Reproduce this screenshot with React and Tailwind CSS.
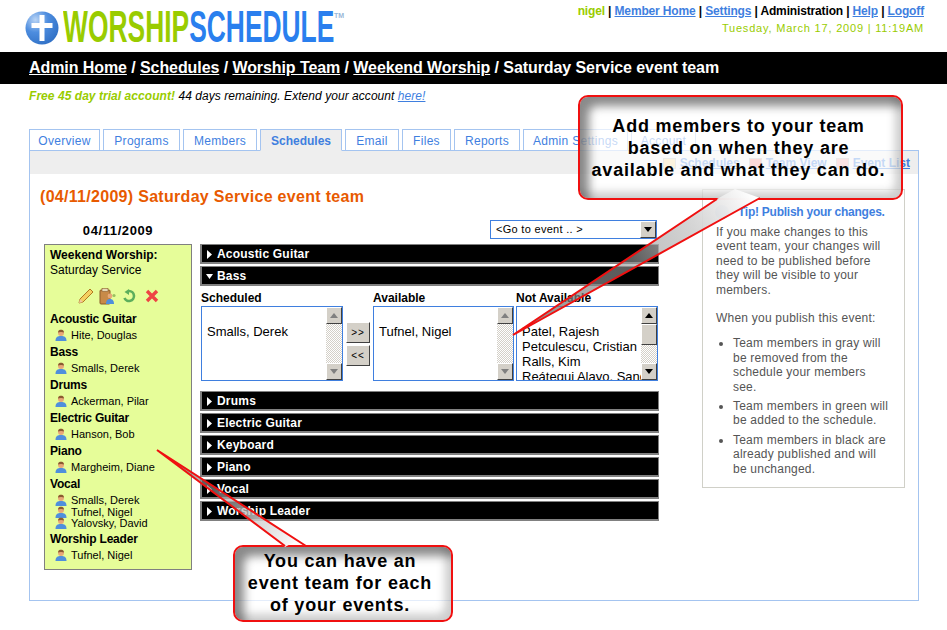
const tabs = [
  ["Overview", "w-[71px]"],
  ["Programs", "w-[77px]"],
  ["Members", "w-[74px]"],
  ["Schedules", "w-[82px]"],
  ["Email", "w-[54px]"],
  ["Files", "w-[49px]"],
  ["Reports", "w-[66px]"],
  ["Admin Settings", "w-[105px]"],
  ["Account", "w-[65px]"],
];

const roster = [
  ["Acoustic Guitar", ["Hite, Douglas"]],
  ["Bass", ["Smalls, Derek"]],
  ["Drums", ["Ackerman, Pilar"]],
  ["Electric Guitar", ["Hanson, Bob"]],
  ["Piano", ["Margheim, Diane"]],
  ["Vocal", ["Smalls, Derek", "Tufnel, Nigel", "Yalovsky, David"]],
  ["Worship Leader", ["Tufnel, Nigel"]],
];

function Globe() {
  return (
    <svg width="34" height="34" viewBox="0 0 34 34" className="shrink-0">
      <defs>
        <radialGradient id="globe" cx="0.3" cy="0.25" r="0.85">
          <stop offset="0" stopColor="#b9d4f5" />
          <stop offset="0.45" stopColor="#4d8ddf" />
          <stop offset="1" stopColor="#2f6fc4" />
        </radialGradient>
      </defs>
      <circle cx="17" cy="17" r="16.5" fill="url(#globe)" />
      <path d="M14.5 4h5v8h8v5h-8v13h-5V17h-8v-5h8z" fill="#fff" />
    </svg>
  );
}

function Person() {
  return (
    <svg width="12" height="12" viewBox="0 0 12 12" className="shrink-0">
      <path d="M0.5 12c0-4 2-5 5.5-5s5.5 1 5.5 5z" fill="#4f8fdc" />
      <circle cx="6" cy="4" r="3" fill="#e8a878" />
      <path d="M3 3.6C3.2 1.2 4.6.8 6 .8s2.8.4 3 2.8C7.6 2.8 4.6 2.8 3 3.6z" fill="#8a5a30" />
    </svg>
  );
}

function Triangle({ open }) {
  return (
    <svg width="7" height="9" viewBox="0 0 7 9" className="shrink-0">
      {open ? <polygon points="0,2 7,2 3.5,7" fill="#fff" /> : <polygon points="1,0 6,4.5 1,9" fill="#fff" />}
    </svg>
  );
}

function AccRow({ label, open }) {
  return (
    <div className="h-[20px] flex items-center gap-[4px] pl-[4px] pt-[1px] bg-black border border-b-2 border-l-2 border-[#808080] text-white text-[12px] font-bold tracking-[0.2px]">
      <Triangle open={open} />
      {label}
    </div>
  );
}

function ScrollBtn({ down, active }) {
  return (
    <div className="w-[16px] h-[17px] shrink-0 flex items-center justify-center bg-[#d4d0c8] border border-t-white border-l-white border-r-[#404040] border-b-[#404040]">
      <svg width="8" height="5" viewBox="0 0 8 5">
        <polygon points={down ? "0,0 8,0 4,5" : "4,0 8,5 0,5"} fill={active ? "#000" : "#808080"} />
      </svg>
    </div>
  );
}

function Listbox({ width, items, active }) {
  return (
    <div className={`${width} h-[75px] flex bg-white border border-[#3f7fdf] overflow-hidden`}>
      <div className="flex-1 pt-[17px] pl-[5px] text-[13px] leading-[15px] text-black whitespace-nowrap overflow-hidden">
        {items.map((n) => (
          <div key={n}>{n}</div>
        ))}
      </div>
      <div className="w-[16px] flex flex-col bg-[repeating-conic-gradient(#d4d0c8_0_25%,#fff_0_50%)] bg-[length:2px_2px]">
        <ScrollBtn active={active} />
        {active && <div className="w-[16px] h-[21px] bg-[#d4d0c8] border border-t-white border-l-white border-r-[#404040] border-b-[#404040]" />}
        <div className="flex-1" />
        <ScrollBtn down active={active} />
      </div>
    </div>
  );
}

function MoveBtn({ label }) {
  return (
    <div className="w-[24px] h-[21px] flex items-center justify-center bg-[#d4d0c8] border border-t-white border-l-white border-r-[#404040] border-b-[#404040] text-[10px] tracking-[1px] text-black">
      {label}
    </div>
  );
}

function Bubble({ className, children }) {
  return (
    <div className={`absolute z-20 flex items-center justify-center text-center bg-white/70 border-2 border-[#f01010] rounded-[10px] font-bold text-[18px] leading-[22px] tracking-[0.8px] text-black shadow-[inset_9px_9px_10px_rgba(60,60,60,0.6),inset_-6px_-6px_8px_rgba(90,90,90,0.3)] ${className}`}>
      {children}
    </div>
  );
}

function Tails() {
  return (
    <svg className="absolute z-30 left-0 top-0 pointer-events-none" width="947" height="630" viewBox="0 0 947 630">
      <defs>
        <linearGradient id="tailA" x1="750" y1="190" x2="513" y2="335" gradientUnits="userSpaceOnUse">
          <stop offset="0" stopColor="#fff" stopOpacity="1" />
          <stop offset="0.18" stopColor="#ddd" stopOpacity="0.95" />
          <stop offset="0.5" stopColor="#999" stopOpacity="0.6" />
          <stop offset="1" stopColor="#666" stopOpacity="0.85" />
        </linearGradient>
        <linearGradient id="tailB" x1="296" y1="548" x2="157" y2="450" gradientUnits="userSpaceOnUse">
          <stop offset="0" stopColor="#fff" stopOpacity="1" />
          <stop offset="0.3" stopColor="#ccc" stopOpacity="0.8" />
          <stop offset="0.6" stopColor="#999" stopOpacity="0.6" />
          <stop offset="1" stopColor="#666" stopOpacity="0.9" />
        </linearGradient>
      </defs>
      <polygon points="717,199 735,189 760,198 513,335" fill="url(#tailA)" />
      <polyline points="717,199 513,335 760,198" fill="none" stroke="#f01010" strokeWidth="2" />
      <polygon points="285,547 296,541 306,547 157,450" fill="url(#tailB)" />
      <polyline points="285,546 157,450 306,546" fill="none" stroke="#f01010" strokeWidth="2" />
    </svg>
  );
}

function ActionIcons() {
  return (
    <div className="h-[16px] mt-[10px] flex items-center pl-[28px]">
      <svg width="16" height="16" viewBox="0 0 16 16">
        <path d="M1 15l1-4L12 1l3 3L5 14z" fill="#f5d060" stroke="#b07820" strokeWidth="1" />
        <path d="M1 15l1-4 3 3z" fill="#f0c8a0" />
      </svg>
      <svg className="ml-[5px]" width="17" height="17" viewBox="0 0 17 17">
        <rect x="1" y="2" width="10" height="14" rx="1" fill="#c88a48" stroke="#8a5a28" />
        <rect x="3" y="0.5" width="6" height="3" fill="#e6d8b8" stroke="#8a5a28" strokeWidth="0.6" />
        <circle cx="11" cy="8" r="2.4" fill="#e8a878" />
        <path d="M7 16c0-4 2-5 4-5s4 1 4 5z" fill="#4f8fdc" />
        <circle cx="15" cy="7.5" r="1.6" fill="#9ac060" />
      </svg>
      <svg className="ml-[6px]" width="14" height="14" viewBox="0 0 14 14">
        <path d="M7 2a5 5 0 1 1-4.6 7" fill="none" stroke="#5cae5c" strokeWidth="2.6" />
        <polygon points="7,0 7,6 2.5,3" fill="#5cae5c" />
      </svg>
      <svg className="ml-[9px]" width="14" height="14" viewBox="0 0 14 14">
        <path d="M2 2l10 10M12 2L2 12" stroke="#ee4444" strokeWidth="3.4" />
      </svg>
    </div>
  );
}

function TopLink({ icon, label }) {
  return (
    <a className="flex items-center gap-[4px] pt-[1px] text-[#3f7fdf] font-bold underline text-[12px]">
      <span className={`w-[13px] h-[11px] border border-[#b8b8b8] ${icon}`} />
      {label}
    </a>
  );
}

export default function App() {
  return (
    <div className="relative w-[947px] h-[630px] overflow-hidden bg-white font-['Liberation_Sans',Arial,sans-serif] text-[12px] text-black">
      {/* header */}
      <div className="h-[52px] flex justify-between">
        <div className="flex items-start pt-[11px] pl-[25px]">
          <Globe />
          <div className="relative w-[270px] h-[32px] ml-[4px]">
            <div className="absolute left-0 top-[-7px] origin-left scale-x-[0.6] text-[44px] leading-[46px] font-bold whitespace-nowrap">
              <span className="text-[#99cc00]">WORSHIP</span>
              <span className="text-[#2a7fee]">SCHEDULE</span>
            </div>
          </div>
          <span className="text-[7px] leading-[8px] font-bold text-[#99b8d8] mt-[1px] ml-[1px]">TM</span>
        </div>
        <div className="pr-[23px] pt-[4px] text-right">
          <div className="text-[12px] leading-[15px] font-bold whitespace-nowrap tracking-[-0.15px]">
            <span className="text-[#99cc00]">nigel</span> |{" "}
            <a className="text-[#3f7fdf] underline">Member Home</a> |{" "}
            <a className="text-[#3f7fdf] underline">Settings</a> | Administration |{" "}
            <a className="text-[#3f7fdf] underline">Help</a> |{" "}
            <a className="text-[#3f7fdf] underline">Logoff</a>
          </div>
          <div className="mt-[2px] text-[11px] leading-[14px] tracking-[0.8px] text-[#99cc00]">Tuesday, March 17, 2009 | 11:19AM</div>
        </div>
      </div>

      {/* breadcrumb */}
      <div className="h-[32px] flex items-center pl-[29px] bg-black text-white text-[16px] font-bold tracking-[-0.08px]">
        <a className="underline">Admin Home</a>
        <span>&nbsp;/&nbsp;</span>
        <a className="underline">Schedules</a>
        <span>&nbsp;/&nbsp;</span>
        <a className="underline">Worship Team</a>
        <span>&nbsp;/&nbsp;</span>
        <a className="underline">Weekend Worship</a>
        <span>&nbsp;/ Saturday Service event team</span>
      </div>

      <div className="pl-[29px] pt-[5px] h-[45px] leading-[15px] italic text-[12px] tracking-[0.05px]">
        <span className="font-bold text-[#99cc00]">Free 45 day trial account!</span> 44 days remaining. Extend your account{" "}
        <a className="text-[#3f7fdf] underline">here!</a>
      </div>

      {/* tabs */}
      <div className="relative z-10 flex gap-[3px] pl-[29px] -mb-px">
        {tabs.map(([name, w]) => (
          <div
            key={name}
            className={`${w} h-[22px] pt-[1px] flex items-center justify-center border border-[#a4c4f0] text-[12px] text-[#3f7fdf] ${
              name === "Schedules" ? "bg-[#eeeeee] border-b-[#eeeeee] font-bold" : "bg-white tracking-[0.3px]"
            }`}
          >
            {name}
          </div>
        ))}
      </div>

      {/* panel */}
      <div className="ml-[29px] w-[890px] h-[451px] border border-[#a4c4f0]">
        <div className="h-[23px] flex items-center justify-end gap-[9px] pr-[8px] bg-[#eeeeee]">
          <TopLink icon="bg-[#f0d890]" label="Schedules" />
          <TopLink icon="bg-[#f08080]" label="Team View" />
          <TopLink icon="bg-[#f0a0a0]" label="Event List" />
        </div>

        <div className="flex">
          <div className="w-[672px]">
            <div className="mt-[14px] pl-[10px] h-[18px] text-[16px] leading-[18px] font-bold tracking-[0.3px] text-[#e85a00]">
              (04/11/2009) Saturday Service event team
            </div>
            <div className="mt-[14px] flex pl-[14px] gap-[8px]">
              {/* left roster */}
              <div className="w-[148px]">
                <div className="h-[24px] pt-[3px] text-center text-[13px] leading-[16px] font-bold tracking-[0.6px]">04/11/2009</div>
                <div className="h-[326px] bg-[#e6fd99] border border-[#808080] pl-[5px] pt-[3px]">
                  <div className="font-bold leading-[15px]">Weekend Worship:</div>
                  <div className="leading-[15px]">Saturday Service</div>
                  <ActionIcons />
                  <div className="mt-[7px]">
                    {roster.map(([part, names]) => (
                      <div key={part} className="pb-[3px]">
                        <div className="h-[16px] font-bold text-[12px] leading-[16px] tracking-[-0.2px]">{part}</div>
                        <div className="mt-[2px]">
                          {names.map((n) => (
                            <div key={n} className="h-[11px] first:h-[12px] flex items-center gap-[4px] pl-[5px] text-[11px] leading-[12px]">
                              <Person />
                              {n}
                            </div>
                          ))}
                        </div>
                      </div>
                    ))}
                  </div>
                </div>
              </div>

              {/* team columns */}
              <div className="w-[459px]">
                <div className="h-[24px] flex justify-end pr-[2px]">
                  <div className="w-[167px] h-[19px] flex items-center justify-between pl-[5px] border border-[#3f7fdf] bg-white text-[11px] tracking-[0.3px]">
                    &lt;Go to event .. &gt;
                    <ScrollBtn down active />
                  </div>
                </div>
                <div className="flex flex-col gap-[2px]">
                  <AccRow label="Acoustic Guitar" />
                  <AccRow label="Bass" open />
                  <div className="h-[101px] pl-[1px] pt-[2px]">
                    <div className="flex font-bold text-[12px] leading-[16px]">
                      <div className="w-[172px]">Scheduled</div>
                      <div className="w-[143px]">Available</div>
                      <div>Not Available</div>
                    </div>
                    <div className="flex">
                      <Listbox width="w-[142px]" items={["Smalls, Derek"]} />
                      <div className="w-[30px] pl-[3px] pt-[16px] flex flex-col gap-[2px]">
                        <MoveBtn label=">>" />
                        <MoveBtn label="<<" />
                      </div>
                      <Listbox width="w-[141px]" items={["Tufnel, Nigel"]} />
                      <div className="w-[2px]" />
                      <Listbox
                        width="w-[142px]"
                        active
                        items={["Patel, Rajesh", "Petculescu, Cristian", "Ralls, Kim", "Reátegui Alayo, Sandu"]}
                      />
                    </div>
                  </div>
                  {["Drums", "Electric Guitar", "Keyboard", "Piano", "Vocal", "Worship Leader"].map((n) => (
                    <AccRow key={n} label={n} />
                  ))}
                </div>
              </div>
            </div>
          </div>

          {/* tip */}
          <div className="mt-[15px] w-[203px] h-[299px] border border-[#d0d0c8] pl-[13px] pr-[13px] pt-[15px] text-[#555] text-[12px] leading-[14.4px] tracking-[0.22px]">
            <div className="flex items-center gap-[9px] -ml-[1px] h-[14px] font-bold text-[#3f7fdf] tracking-[-0.25px] whitespace-nowrap">
              <span className="w-[14px] h-[14px] rounded-full bg-[#7fa8e0]" />
              Tip! Publish your changes.
            </div>
            <div className="mt-[6px]">
              If you make changes to this event team, your changes will need to be published before they will be visible to your members.
            </div>
            <div className="mt-[14px]">When you publish this event:</div>
            <ul className="mt-[11px] pl-[17px] list-disc">
              <li className="mb-[5px]">Team members in gray will be removed from the schedule your members see.</li>
              <li className="mb-[5px]">Team members in green will be added to the schedule.</li>
              <li>Team members in black are already published and will be unchanged.</li>
            </ul>
          </div>
        </div>
      </div>

      {/* callouts */}
      <Bubble className="left-[578px] top-[95px] w-[325px] h-[105px] pr-[4px]">
        Add members to your team
        <br />
        based on when they are
        <br />
        available and what they can do.
      </Bubble>
      <Bubble className="left-[233px] top-[545px] w-[220px] h-[77px] pr-[6px] pb-[2px]">
        You can have an
        <br />
        event team for each
        <br />
        of your events.
      </Bubble>
      <Tails />
    </div>
  );
}
